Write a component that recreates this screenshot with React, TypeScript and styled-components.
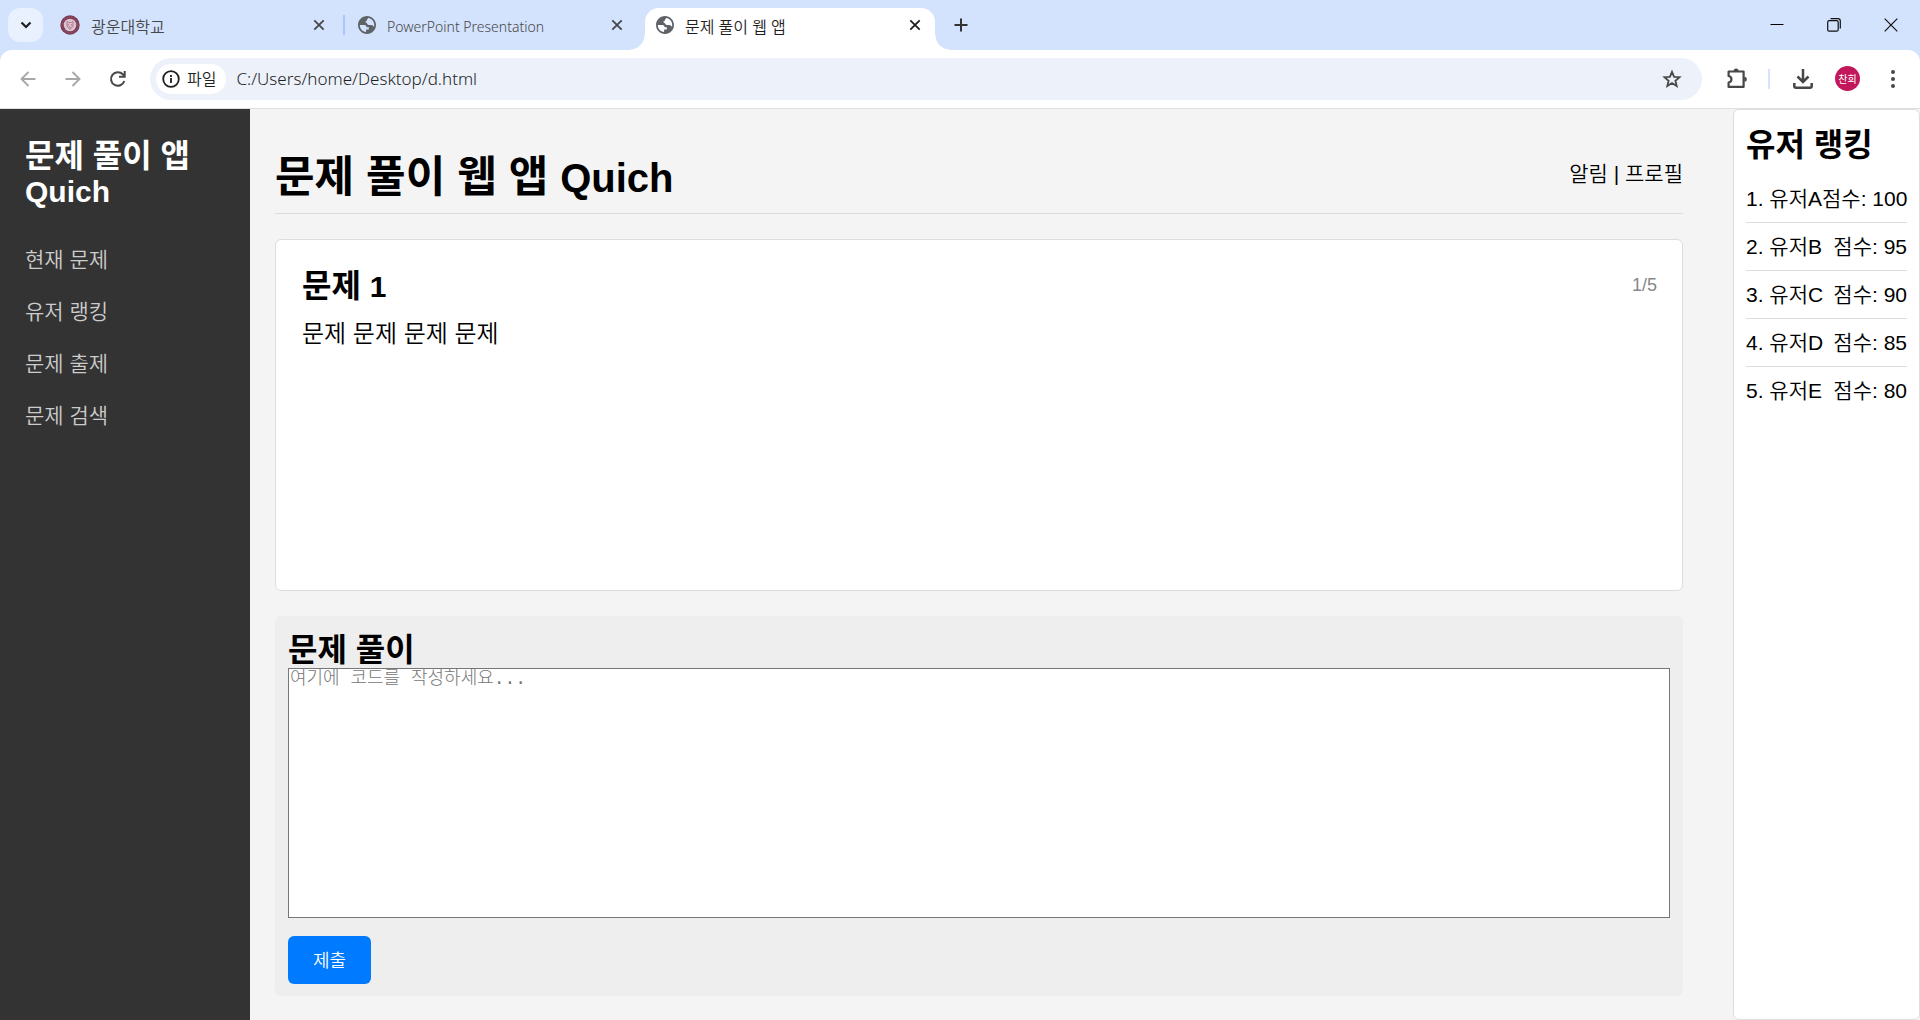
import React from "react";
import styled, { createGlobalStyle } from "styled-components";

const pageFont = `"Liberation Sans", "Noto Sans CJK KR", sans-serif`;
const chromeFont = `"Noto Sans", "Noto Sans CJK KR", sans-serif`;

const GlobalStyle = createGlobalStyle`
  *, *::before, *::after { box-sizing: border-box; }
  body { margin: 0; background: #f4f4f4; font-family: ${pageFont}; font-weight: 350; color: #000; }
  h1, h2, p, ul, ol { margin: 0; padding: 0; }
  ul, ol { list-style: none; }
  button { border: 0; padding: 0; background: none; font: inherit; color: inherit; }
  svg { display: block; flex: none; }
`;

const Window = styled.div`
  display: flex;
  flex-direction: column;
  min-height: 100vh;
`;

/* ---------- browser chrome ---------- */

const TabStrip = styled.div`
  display: flex;
  align-items: flex-end;
  height: 50px;
  padding: 0 1px 0 8px;
  background: #d3e2fd;
  font-family: ${chromeFont};
`;

const TabSearch = styled.button`
  display: grid;
  place-items: center;
  width: 35px;
  height: 34px;
  margin: 0 6px 8px 0;
  border-radius: 12px;
  background: #e9f0fe;
`;

const Tab = styled.div<{ $active?: boolean }>`
  position: relative;
  display: flex;
  align-items: center;
  width: 290px;
  height: 42px;
  padding: 0 10px 8px 11px;
  border-radius: 14px 14px 0 0;
  background: ${(p) => (p.$active ? "#fff" : "transparent")};
  color: ${(p) => (p.$active ? "#1f1f1f" : "#474747")};

  &::before,
  &::after {
    content: "";
    display: ${(p) => (p.$active ? "block" : "none")};
    position: absolute;
    bottom: 0;
    width: 15px;
    height: 15px;
  }
  &::before {
    right: 100%;
    background: radial-gradient(circle at 0 0, transparent 14px, #fff 15px);
  }
  &::after {
    left: 100%;
    background: radial-gradient(circle at 100% 0, transparent 14px, #fff 15px);
  }
`;

const TabTitle = styled.span<{ $latin?: boolean }>`
  flex: 1;
  padding: 3px 0 0 11px;
  font-size: ${(p) => (p.$latin ? 14 : 16)}px;
  line-height: 20px;
  white-space: nowrap;
`;

const TabClose = styled.button`
  display: grid;
  place-items: center;
  width: 20px;
  height: 20px;
`;

const TabDivider = styled.span<{ $hidden?: boolean }>`
  width: 2px;
  height: 20px;
  margin: 0 2px 15px 4px;
  background: ${(p) => (p.$hidden ? "transparent" : "#a8c7fa")};
`;

const NewTab = styled.button`
  display: grid;
  place-items: center;
  width: 34px;
  height: 34px;
  margin: 0 auto 8px 9px;
`;

const Caption = styled.button`
  display: grid;
  place-items: center;
  width: 57px;
  height: 50px;
`;

const ToolbarBack = styled.div`
  background: #d3e2fd;
`;

const Toolbar = styled.div`
  display: flex;
  align-items: center;
  height: 59px;
  padding: 0 5px 1px;
  border-bottom: 1px solid #dedfe0;
  border-radius: 12px 12px 0 0;
  background: #fff;
  font-family: ${chromeFont};
`;

const ToolButton = styled.button`
  display: grid;
  place-items: center;
  width: 45px;
  height: 40px;
  flex: none;
`;

const Omnibox = styled.div`
  display: flex;
  align-items: center;
  flex: 1;
  height: 42px;
  margin: 0 12px 0 10px;
  padding: 0 8px 0 6px;
  border-radius: 21px;
  background: #ecf1fa;
`;

const FileChip = styled.button`
  display: flex;
  align-items: center;
  gap: 7px;
  height: 30px;
  padding: 0 10px 0 6px;
  border-radius: 15px;
  background: #fff;
  color: #1f1f1f;
  font-size: 16px;
  line-height: 20px;
`;

const Address = styled.input`
  flex: 1;
  min-width: 0;
  height: 30px;
  padding: 0 0 0 10px;
  border: 0;
  outline: 0;
  background: transparent;
  color: #1f1f1f;
  font-family: ${chromeFont};
  font-size: 17px;
  font-weight: 350;
`;

const ToolDivider = styled.span`
  width: 2px;
  height: 20px;
  margin: 0 10px 0 9px;
  background: #d3e2fd;
`;

const Avatar = styled.span`
  display: grid;
  place-items: center;
  width: 25px;
  height: 25px;
  border-radius: 50%;
  background: #c2185b;
  color: #fff;
  font-size: 10px;
  font-weight: 400;
  line-height: 12px;
`;

/* ---------- page ---------- */

const Page = styled.div`
  display: flex;
  flex: 1;
`;

const Sidebar = styled.aside`
  width: 250px;
  flex: none;
  padding: 30px 25px;
  background: #333;
  color: #fff;
`;

const Heading = styled.h2`
  font-size: 32px;
  line-height: 35px;
  font-weight: 700;
`;

const Latin = styled.span`
  font-size: 30px;
`;

const Nav = styled.nav`
  margin-top: 38px;
`;

const NavList = styled.ul`
  display: grid;
  gap: 26px;
`;

const NavLink = styled.a`
  display: block;
  color: #ccc;
  font-size: 21px;
  line-height: 26px;
  text-decoration: none;
`;

const Main = styled.main`
  display: flex;
  flex: 1;
  flex-direction: column;
  min-width: 0;
  padding: 25px 50px 24px 25px;
`;

const Header = styled.header`
  display: flex;
  align-items: center;
  justify-content: space-between;
  height: 80px;
  margin-bottom: 25px;
  border-bottom: 1px solid #ddd;
`;

const PageTitle = styled.h1`
  padding-top: 7px;
  font-size: 43px;
  line-height: 50px;
`;

const TitleLatin = styled.span`
  font-size: 40px;
`;

const HeaderLinks = styled.div`
  font-size: 21px;
  line-height: 26px;
`;

const ProblemCard = styled.section`
  display: flex;
  flex: 1;
  align-items: flex-start;
  justify-content: space-between;
  min-height: 200px;
  margin-bottom: 25px;
  padding: 29px 25px 25px 26px;
  border: 1px solid #ddd;
  border-radius: 6px;
  background: #fff;
`;

const ProblemText = styled.p`
  margin-top: 15px;
  font-size: 24px;
  line-height: 30px;
`;

const Progress = styled.span`
  padding-top: 6px;
  color: #888;
  font-size: 18px;
  line-height: 20px;
`;

const SolveSection = styled.section`
  display: flex;
  flex-direction: column;
  align-items: flex-start;
  padding: 17px 13px 12px;
  border-radius: 6px;
  background: #eee;
`;

const CodeArea = styled.textarea`
  display: block;
  width: 100%;
  height: 250px;
  margin-bottom: 18px;
  padding: 0 1px;
  border: 1px solid #767676;
  border-radius: 0;
  outline: 0;
  background: #fff;
  font-family: "Liberation Mono", "Noto Sans CJK KR", monospace;
  font-size: 18px;
  font-weight: 300;
  line-height: 20px;
  resize: none;
  &::placeholder { color: #757575; opacity: 1; }
`;

const SubmitButton = styled.button`
  height: 48px;
  padding: 0 25px 2px;
  border-radius: 6px;
  background: #007bff;
  color: #fff;
  font-size: 18px;
`;

const RankPanel = styled.aside`
  width: 187px;
  flex: none;
  padding: 18px 12px;
  border: 1px solid #ddd;
  border-radius: 6px;
  background: #fff;
`;

const RankList = styled.ol`
  margin-top: 12px;
`;

const RankItem = styled.li`
  display: flex;
  justify-content: space-between;
  padding: 11px 0 10px;
  border-bottom: 1px solid #ddd;
  font-size: 21px;
  line-height: 26px;
  white-space: nowrap;
  &:last-child { border-bottom: 0; }
`;

/* ---------- icons ---------- */

const Globe = () => (
  <svg width="18" height="18" viewBox="2 2 20 20" fill="#5f6368">
    <path d="M12 2C6.48 2 2 6.48 2 12s4.48 10 10 10 10-4.48 10-10S17.52 2 12 2zm8 10c0 .7-.1 1.400-.25 2-.8-1-1.700-2-3-2h-2.750c-2 0-2-3-4-3 0-1.500 2-1 2-2.500 0-1 1-1.500 1.500-2.300C17.500 5 20 8 20 12zM4 12h5c1.500 0 2.500 1 2.500 2.500H14V17h-3v2.900C7 19.500 4 16 4 12z" />
  </svg>
);

const Crest = () => (
  <svg width="20" height="20" viewBox="0 0 20 20">
    <circle cx="10" cy="10" r="9.700" fill="#7b3b52" />
    <circle cx="10" cy="10" r="7.900" fill="none" stroke="#a77186" strokeWidth=".7" strokeDasharray="1 1" />
    <circle cx="10" cy="10" r="6.300" fill="#dcc3d0" />
    <path d="M7 6.500l1.500 1h3l1.500-1v4.500L10 14.500 7 11zM8.500 9v1.500m3-1.500v1.500M10 11v2" fill="none" stroke="#b5788e" strokeWidth="1" />
  </svg>
);

const CloseIcon = ({ color }: { color: string }) => (
  <svg width="12" height="12" viewBox="0 0 12 12" stroke={color} strokeWidth="1.800">
    <path d="M1.300 1.300l9.400 9.400M10.700 1.300l-9.400 9.400" />
  </svg>
);

const Arrow = ({ back }: { back?: boolean }) => (
  <svg width="16" height="16" viewBox="0 0 16 16" fill="none" stroke="#a8a8a8" strokeWidth="1.900">
    <path d={back ? "M15.500 8H2M8.500 1L1.500 8l7 7" : "M.5 8H14M7.500 1l7 7-7 7"} />
  </svg>
);

const Reload = () => (
  <svg width="18" height="18" viewBox="0 0 18 18" fill="none" stroke="#474747" strokeWidth="2">
    <path d="M15.300 11A6.800 6.800 0 1 1 13.800 4.300L15.500 6" />
    <path d="M15.700 1v5.800H10" />
  </svg>
);

const Info = () => (
  <svg width="18" height="18" viewBox="0 0 18 18" fill="none" stroke="#1f1f1f" strokeWidth="1.800">
    <circle cx="9" cy="9" r="7.800" />
    <path d="M9 8v5M9 5v1.900" />
  </svg>
);

const Star = () => (
  <svg width="20" height="20" viewBox="0 0 20 20" fill="none" stroke="#474747" strokeWidth="1.800">
    <path d="M10 2.800l2.100 5 5.400.4-4.100 3.500 1.300 5.300-4.700-2.900L5.300 17l1.300-5.300-4.100-3.500 5.400-.4z" />
  </svg>
);

const Puzzle = () => (
  <svg width="22" height="22" viewBox="0 0 22 22" fill="none" stroke="#474747" strokeWidth="2.200">
    <path d="M2.600 3.500h15v15.400h-15V14.500c3.800-.6 3.800-5.900 0-6.500z" strokeLinejoin="round" />
    <path d="M7.600 3a2.500 2.500 0 0 1 5 0zM18.300 8.700a2.500 2.500 0 0 1 0 5z" fill="#474747" stroke="none" />
  </svg>
);

const Download = () => (
  <svg width="20" height="20" viewBox="0 0 20 20" fill="none" stroke="#474747" strokeWidth="2.500">
    <path d="M10 0v12.500M4.500 7.500L10 13l5.500-5.500M1.300 14v3q0 1.700 1.700 1.700h14q1.700 0 1.700-1.700V14" />
  </svg>
);

const Dots = () => (
  <svg width="4" height="18" viewBox="0 0 4 18" fill="#474747">
    <circle cx="2" cy="2" r="2" />
    <circle cx="2" cy="9" r="2" />
    <circle cx="2" cy="16" r="2" />
  </svg>
);

/* ---------- data ---------- */

const tabs = [
  { title: "광운대학교", icon: <Crest />, active: false, latin: false },
  { title: "PowerPoint Presentation", icon: <Globe />, active: false, latin: true },
  { title: "문제 풀이 웹 앱", icon: <Globe />, active: true, latin: false },
];

const navItems = ["현재 문제", "유저 랭킹", "문제 출제", "문제 검색"];

const ranking = [
  { name: "유저A", score: 100 },
  { name: "유저B", score: 95 },
  { name: "유저C", score: 90 },
  { name: "유저D", score: 85 },
  { name: "유저E", score: 80 },
];

export default function App() {
  return (
    <Window>
      <GlobalStyle />
      <TabStrip>
        <TabSearch aria-label="탭 검색">
          <svg width="12" height="8" viewBox="0 0 12 8" fill="none" stroke="#1f1f1f" strokeWidth="2.200">
            <path d="M1.500 1.500L6 6l4.500-4.500" />
          </svg>
        </TabSearch>
        {tabs.map((tab, i) => (
          <React.Fragment key={tab.title}>
            <Tab $active={tab.active}>
              {tab.icon}
              <TabTitle $latin={tab.latin}>{tab.title}</TabTitle>
              <TabClose aria-label="탭 닫기">
                <CloseIcon color={tab.active ? "#1f1f1f" : "#474747"} />
              </TabClose>
            </Tab>
            {i < tabs.length - 1 && <TabDivider $hidden={tabs[i + 1].active} />}
          </React.Fragment>
        ))}
        <NewTab aria-label="새 탭">
          <svg width="14" height="14" viewBox="0 0 14 14" stroke="#333" strokeWidth="2">
            <path d="M7 .5v13M.5 7h13" />
          </svg>
        </NewTab>
        <Caption aria-label="최소화">
          <svg width="14" height="14" viewBox="0 0 14 14" stroke="#000">
            <path d="M.5 6.500h13" />
          </svg>
        </Caption>
        <Caption aria-label="이전 크기로">
          <svg width="14" height="14" viewBox="0 0 14 14" fill="none" stroke="#111" strokeWidth="1.200">
            <rect x=".7" y="2.700" width="10.500" height="10.500" rx="1.500" />
            <path d="M3.500.7h7.500q2.300 0 2.300 2.300v7.500" />
          </svg>
        </Caption>
        <Caption aria-label="닫기">
          <svg width="14" height="14" viewBox="0 0 14 14" stroke="#111" strokeWidth="1.200">
            <path d="M.7.7l12.600 12.600M13.300.7L.7 13.300" />
          </svg>
        </Caption>
      </TabStrip>

      <ToolbarBack>
        <Toolbar>
          <ToolButton aria-label="뒤로"><Arrow back /></ToolButton>
          <ToolButton aria-label="앞으로"><Arrow /></ToolButton>
          <ToolButton aria-label="새로고침"><Reload /></ToolButton>
          <Omnibox>
            <FileChip><Info />파일</FileChip>
            <Address aria-label="주소" defaultValue="C:/Users/home/Desktop/d.html" />
            <ToolButton aria-label="북마크"><Star /></ToolButton>
          </Omnibox>
          <ToolButton aria-label="확장 프로그램"><Puzzle /></ToolButton>
          <ToolDivider />
          <ToolButton aria-label="다운로드"><Download /></ToolButton>
          <ToolButton aria-label="프로필"><Avatar>찬희</Avatar></ToolButton>
          <ToolButton aria-label="메뉴"><Dots /></ToolButton>
        </Toolbar>
      </ToolbarBack>

      <Page>
        <Sidebar>
          <Heading>문제 풀이 앱 <Latin>Quich</Latin></Heading>
          <Nav>
            <NavList>
              {navItems.map((item) => (
                <li key={item}><NavLink href="#">{item}</NavLink></li>
              ))}
            </NavList>
          </Nav>
        </Sidebar>

        <Main>
          <Header>
            <PageTitle>문제 풀이 웹 앱 <TitleLatin>Quich</TitleLatin></PageTitle>
            <HeaderLinks>알림 | 프로필</HeaderLinks>
          </Header>
          <ProblemCard>
            <div>
              <Heading>문제 <Latin>1</Latin></Heading>
              <ProblemText>문제 문제 문제 문제</ProblemText>
            </div>
            <Progress>1/5</Progress>
          </ProblemCard>
          <SolveSection>
            <Heading as="label" htmlFor="code">문제 풀이</Heading>
            <CodeArea id="code" placeholder="여기에 코드를 작성하세요..." />
            <SubmitButton>제출</SubmitButton>
          </SolveSection>
        </Main>

        <RankPanel>
          <Heading>유저 랭킹</Heading>
          <RankList>
            {ranking.map((user, i) => (
              <RankItem key={user.name}>
                <span>{i + 1}. {user.name}</span>
                <span>점수: {user.score}</span>
              </RankItem>
            ))}
          </RankList>
        </RankPanel>
      </Page>
    </Window>
  );
}
